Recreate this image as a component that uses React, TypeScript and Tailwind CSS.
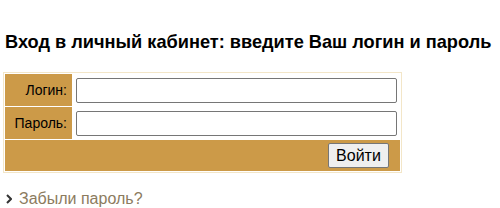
export default function App() {
  return (
    <div className="w-[500px] h-[208px] bg-white overflow-hidden" style={{ fontFamily: '"Liberation Sans", Arial, sans-serif' }}>
      <div className="pt-[32px] pl-[5px]">
        <h1 className="text-[18.2px] font-bold text-black leading-[21px] m-0 whitespace-nowrap">Вход в личный кабинет: введите Ваш логин и пароль</h1>
      </div>
      <div className="pl-[3px] pt-[19px]">
        <table className="border-separate border border-[#f3e6c8] w-[399px] text-[14px]" style={{ borderSpacing: '1px' }}>
          <tbody>
            <tr>
              <td className="bg-[#cc9a48] text-right pr-[5px] w-[67px] h-[32px] text-black">Логин:</td>
              <td className="bg-white px-[3px]">
                <input className="w-full h-[25px] border border-[#767676] rounded-[2px] outline-none block" />
              </td>
            </tr>
            <tr>
              <td className="bg-[#cc9a48] text-right pr-[5px] h-[32px] text-black">Пароль:</td>
              <td className="bg-white px-[3px]">
                <input type="password" className="w-full h-[25px] border border-[#767676] rounded-[2px] outline-none block" />
              </td>
            </tr>
            <tr>
              <td colSpan={2} className="bg-[#cc9a48] text-right pr-[11px] h-[31px]">
                <button className="h-[25px] w-[61px] bg-[#efefef] border border-[#767676] rounded-[2px] text-[16px] text-black leading-none">Войти</button>
              </td>
            </tr>
          </tbody>
        </table>
      </div>
      <div className="pl-[6px] pt-[16px] text-[16px] text-[#8c7b5e] flex items-center gap-[7px] leading-[19px]">
        <svg width="6" height="10" viewBox="0 0 6 10" className="mt-[1px]">
          <path d="M1 1 L5 5 L1 9" fill="none" stroke="#333" strokeWidth="2" />
        </svg>
        <span>Забыли пароль?</span>
      </div>
    </div>
  );
}
